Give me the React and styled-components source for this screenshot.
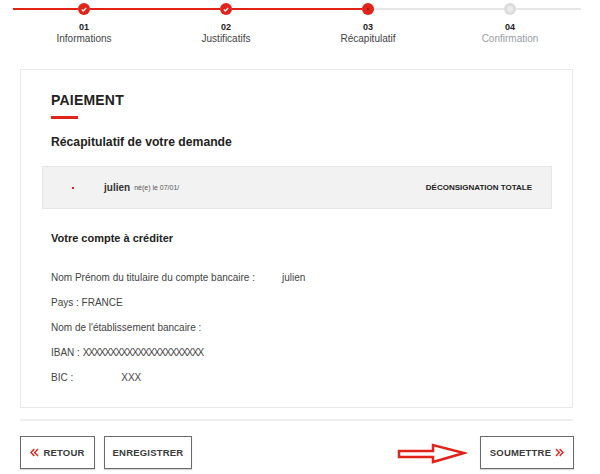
import styled, { createGlobalStyle } from "styled-components";

const RED = "#e2231a";

const GlobalStyle = createGlobalStyle`
  body {
    margin: 0;
    background: #fff;
    font-family: "Liberation Sans", Arial, sans-serif;
    color: #333;
  }
`;

const Page = styled.div`
  width: 600px;
  height: 474px;
  overflow: hidden;
`;

// ---- stepper ----
const Stepper = styled.div`
  display: flex;
  padding: 3px 0 0 13px;
`;

const Step = styled.div`
  width: 142px;
  display: flex;
  flex-direction: column;
  align-items: center;
`;

const Track = styled.div`
  width: 100%;
  height: 12px;
  display: flex;
  align-items: center;
`;

const Segment = styled.div`
  flex: 1;
  height: 2px;
  background: ${(p) => (p.done ? RED : "#e6e6e6")};
`;

const Dot = styled.div`
  width: 12px;
  height: 12px;
  border-radius: 50%;
  flex-shrink: 0;
  display: flex;
  align-items: center;
  justify-content: center;
  background: ${(p) => (p.state === "todo" ? "#dcdcdc" : RED)};
`;

const Inner = styled.span`
  width: ${(p) => (p.state === "todo" ? "6px" : "2px")};
  height: ${(p) => (p.state === "todo" ? "6px" : "2px")};
  border-radius: 50%;
  background: ${(p) => (p.state === "todo" ? "#ebebeb" : "#7a1a14")};
`;

const StepNum = styled.div`
  margin-top: 7px;
  font-size: 9px;
  line-height: 11px;
  font-weight: bold;
  color: #222;
`;

const StepLabel = styled.div`
  font-size: 10px;
  line-height: 12px;
  color: ${(p) => (p.muted ? "#9a9ea4" : "#444")};
`;

const Check = () => (
  <svg width="6" height="5" viewBox="0 0 6 5">
    <path d="M0.8 2.6 L2.3 4 L5.2 0.9" fill="none" stroke="#fff" strokeWidth="1.3" />
  </svg>
);

// ---- card ----
const Card = styled.div`
  margin: 24px 0 0 20px;
  width: 553px;
  box-sizing: border-box;
  border: 1px solid #e8e8e8;
  padding: 22px 20px 17px 21px;
`;

const Section = styled.div`
  padding: 0 9px;
`;

const Title = styled.h2`
  margin: 0;
  font-size: 14px;
  line-height: 16px;
  font-weight: bold;
  color: #222;
  letter-spacing: 0.2px;
`;

const TitleBar = styled.div`
  width: 27px;
  height: 3px;
  margin-top: 8px;
  background: ${RED};
`;

const SubTitle = styled.h3`
  margin: ${(p) => p.mt}px 0 0;
  font-size: ${(p) => p.size}px;
  line-height: 16px;
  font-weight: bold;
  color: #222;
`;

const Summary = styled.div`
  margin-top: 16px;
  height: 43px;
  box-sizing: border-box;
  background: #f2f2f2;
  border: 1px solid #e6e6e6;
  display: flex;
  align-items: center;
  padding: 0 19px 0 29px;
`;

const RedDot = styled.span`
  width: 2px;
  height: 2px;
  background: ${RED};
`;

const Name = styled.span`
  margin-left: 30px;
  font-size: 10px;
  font-weight: 600;
  color: #333;
`;

const Born = styled.span`
  margin-left: 4px;
  font-size: 7px;
  color: #555;
  flex: 1;
`;

const Kind = styled.span`
  font-size: 8px;
  font-weight: bold;
  color: #222;
`;

const Rows = styled.div`
  margin-top: 19px;
`;

const Row = styled.div`
  height: 25px;
  line-height: 25px;
  font-size: 10px;
  color: #444;
`;

const Value = styled.span`
  margin-left: ${(p) => p.gap}px;
`;

const Masked = styled.span`
  letter-spacing: -1.2px;
`;

// ---- footer ----
const Separator = styled.div`
  margin: 11px 0 0 20px;
  width: 553px;
  height: 2px;
  background: #eeeeee;
`;

const Footer = styled.div`
  margin: 15px 0 0 20px;
  width: 554px;
  display: flex;
  align-items: center;
`;

const Button = styled.button`
  width: ${(p) => p.w}px;
  height: 33px;
  margin-right: ${(p) => p.mr || 0}px;
  border: 1px solid #6a6a6a;
  background: #fff;
  box-shadow: 0 1px 1px rgba(0, 0, 0, 0.15);
  display: flex;
  align-items: center;
  justify-content: center;
  gap: 4px;
  font-family: "Liberation Sans", Arial, sans-serif;
  font-size: 9.5px;
  font-weight: bold;
  color: #3a3a3a;
  letter-spacing: 0.2px;
  padding: 0;
`;

const Spacer = styled.div`
  flex: 1;
`;

const Arrow = styled.svg`
  margin-right: 13px;
  margin-top: 3px;
`;

const Chevrons = ({ dir }) => (
  <svg width="9" height="9" viewBox="0 0 9 9">
    <path
      d={dir === "left" ? "M4.3 1 L1 4.5 L4.3 8 M8 1 L4.7 4.5 L8 8" : "M1 1 L4.3 4.5 L1 8 M4.7 1 L8 4.5 L4.7 8"}
      fill="none"
      stroke={RED}
      strokeWidth="1.4"
    />
  </svg>
);

const steps = [
  { num: "01", label: "Informations", state: "done" },
  { num: "02", label: "Justificatifs", state: "done" },
  { num: "03", label: "Récapitulatif", state: "current" },
  { num: "04", label: "Confirmation", state: "todo" },
];

export default function App() {
  return (
    <Page>
      <GlobalStyle />
      <Stepper>
        {steps.map((s) => (
          <Step key={s.num}>
            <Track>
              <Segment done={s.state !== "todo"} />
              <Dot state={s.state}>
                {s.state === "done" ? <Check /> : <Inner state={s.state} />}
              </Dot>
              <Segment done={s.state === "done"} />
            </Track>
            <StepNum>{s.num}</StepNum>
            <StepLabel muted={s.state === "todo"}>{s.label}</StepLabel>
          </Step>
        ))}
      </Stepper>

      <Card>
        <Section>
          <Title>PAIEMENT</Title>
          <TitleBar />
          <SubTitle mt={15} size={12.2}>Récapitulatif de votre demande</SubTitle>
        </Section>

        <Summary>
          <RedDot />
          <Name>julien</Name>
          <Born>né(e) le 07/01/</Born>
          <Kind>DÉCONSIGNATION TOTALE</Kind>
        </Summary>

        <Section>
          <SubTitle mt={21} size={11}>Votre compte à créditer</SubTitle>
          <Rows>
            <Row>
              Nom Prénom du titulaire du compte bancaire :<Value gap={27}>julien</Value>
            </Row>
            <Row>Pays : FRANCE</Row>
            <Row>Nom de l'établissement bancaire :</Row>
            <Row>
              IBAN : <Masked>XXXXXXXXXXXXXXXXXXXXXX</Masked>
            </Row>
            <Row>
              BIC :<Value gap={48}>XXX</Value>
            </Row>
          </Rows>
        </Section>
      </Card>

      <Separator />

      <Footer>
        <Button w={75} mr={9}>
          <Chevrons dir="left" />
          RETOUR
        </Button>
        <Button w={88}>ENREGISTRER</Button>
        <Spacer />
        <Arrow width="70" height="22" viewBox="0 0 70 22">
          <polygon
            points="2,8 36,8 36,2 67,10 36,19 36,14 2,14"
            fill="#fff"
            stroke={RED}
            strokeWidth="2.5"
            strokeLinejoin="miter"
          />
        </Arrow>
        <Button w={94}>
          SOUMETTRE
          <Chevrons dir="right" />
        </Button>
      </Footer>
    </Page>
  );
}
